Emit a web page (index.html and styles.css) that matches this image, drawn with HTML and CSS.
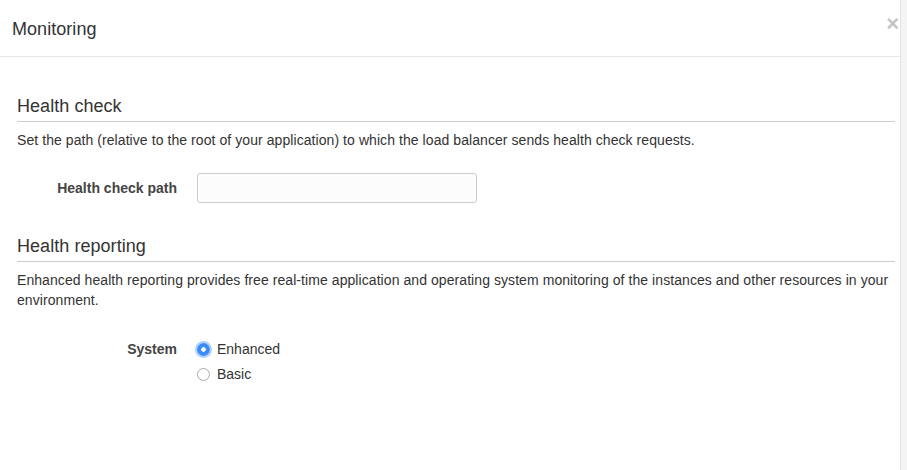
FILE: index.html
```html
<!DOCTYPE html>
<html>
<head>
<meta charset="utf-8">
<link rel="stylesheet" href="styles.css">
</head>
<body>
<div class="modal">
  <div class="modal-header">
    <h1 class="modal-title">Monitoring</h1>
    <span class="close">&#215;</span>
  </div>
  <div class="modal-body">
    <section class="section first">
      <h2 class="section-title">Health check</h2>
      <p class="section-desc">Set the path (relative to the root of your application) to which the load balancer sends health check requests.</p>
      <div class="form-row">
        <label class="form-label">Health check path</label>
        <input class="text-input" type="text">
      </div>
    </section>
    <section class="section second">
      <h2 class="section-title">Health reporting</h2>
      <p class="section-desc">Enhanced health reporting provides free real-time application and operating system monitoring of the instances and other resources in your environment.</p>
      <div class="form-row radio-row">
        <span class="form-label">System</span>
        <div class="radio-group">
          <div class="radio-option"><span class="radio checked"></span><span class="radio-text">Enhanced</span></div>
          <div class="radio-option"><span class="radio"></span><span class="radio-text">Basic</span></div>
        </div>
      </div>
    </section>
  </div>
</div>
</body>
</html>
```

FILE: styles.css
```css
html, body {
  margin: 0;
  padding: 0;
  height: 100%;
}
body {
  background: #f4f4f4;
  font-family: "Liberation Sans", Arial, sans-serif;
  color: #444;
}
.modal {
  width: 900px;
  height: 100%;
  background: #fff;
  border-right: 1px solid #e3e3e3;
}
.modal-header {
  height: 56px;
  border-bottom: 1px solid #e8e8e8;
  display: flex;
  align-items: center;
  justify-content: space-between;
  padding: 0 0 0 12px;
  position: relative;
}
.modal-title {
  margin: 0;
  font-size: 18px;
  font-weight: normal;
  color: #333;
  line-height: 20px;
  padding-top: 1px;
  letter-spacing: 0.05px;
}
.close {
  position: absolute;
  right: 1px;
  top: 13px;
  font-size: 22px;
  font-weight: bold;
  color: #c4c4c4;
  line-height: 22px;
}
.modal-body {
  padding: 0 5px 0 17px;
}
.section-title {
  margin: 0;
  font-size: 18px;
  font-weight: normal;
  color: #333;
  line-height: 20px;
  padding-bottom: 5px;
  border-bottom: 1px solid #ccc;
  letter-spacing: 0.05px;
}
.first .section-title {
  margin-top: 39px;
}
.second .section-title {
  margin-top: 33px;
}
.section-desc {
  margin: 8px 0 0;
  font-size: 14px;
  line-height: 20px;
  color: #333;
  letter-spacing: 0.07px;
}
.form-row {
  display: flex;
  align-items: center;
  margin-top: 23px;
}
.form-label {
  width: 160px;
  text-align: right;
  font-size: 14px;
  font-weight: bold;
  color: #444;
  margin-right: 20px;
}
.text-input {
  box-sizing: border-box;
  width: 280px;
  height: 30px;
  border: 1px solid #ccc;
  border-radius: 3px;
  background: #fcfcfc;
  margin: 0;
  padding: 4px 8px;
  font: inherit;
}
.radio-row {
  align-items: flex-start;
  margin-top: 29px;
}
.radio-row .form-label {
  line-height: 20px;
}
.radio-group {
  display: flex;
  flex-direction: column;
  gap: 5px;
}
.radio-option {
  display: flex;
  align-items: center;
  height: 20px;
}
.radio {
  box-sizing: border-box;
  width: 13px;
  height: 13px;
  border-radius: 50%;
  border: 1px solid #aaa;
  background: #fff;
  margin: 0 7px 0 0;
}
.radio.checked {
  border: none;
  background: radial-gradient(circle, #fff 0 2px, #3b8cf5 2.5px 6px);
  box-shadow: 0 0 0 2px rgba(80, 150, 250, 0.45);
}
.radio-text {
  font-size: 14px;
  color: #333;
  line-height: 20px;
}
```
